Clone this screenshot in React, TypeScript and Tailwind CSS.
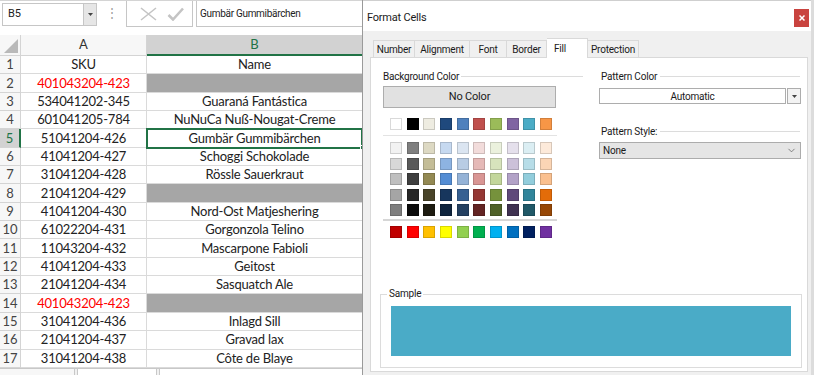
import React from 'react';
import { ChevronDown } from 'lucide-react';

type Row = { sku: string; name: string; red?: boolean; gray?: boolean };

const rows: Row[] = [
  { sku: 'SKU', name: 'Name' },
  { sku: '401043204-423', name: '', red: true, gray: true },
  { sku: '534041202-345', name: 'Guaraná Fantástica' },
  { sku: '601041205-784', name: 'NuNuCa Nuß-Nougat-Creme' },
  { sku: '51041204-426', name: 'Gumbär Gummibärchen' },
  { sku: '41041204-427', name: 'Schoggi Schokolade' },
  { sku: '31041204-428', name: 'Rössle Sauerkraut' },
  { sku: '21041204-429', name: '', gray: true },
  { sku: '41041204-430', name: 'Nord-Ost Matjeshering' },
  { sku: '61022204-431', name: 'Gorgonzola Telino' },
  { sku: '11043204-432', name: 'Mascarpone Fabioli' },
  { sku: '41041204-433', name: 'Geitost' },
  { sku: '21041204-434', name: 'Sasquatch Ale' },
  { sku: '401043204-423', name: '', red: true, gray: true },
  { sku: '31041204-436', name: 'Inlagd Sill' },
  { sku: '21041204-437', name: 'Gravad lax' },
  { sku: '31041204-438', name: 'Côte de Blaye' },
];

const themeColors = [
  'bg-[#ffffff] border-[#9a9a9a]', 'bg-[#000000]', 'bg-[#eeece1]', 'bg-[#1f497d]', 'bg-[#4f81bd]',
  'bg-[#c0504d]', 'bg-[#9bbb59]', 'bg-[#8064a2]', 'bg-[#4bacc6]', 'bg-[#f79646]',
];

const shades = [
  ['bg-[#f2f2f2]', 'bg-[#7f7f7f]', 'bg-[#ddd9c3]', 'bg-[#c6d9f0]', 'bg-[#dbe5f1]', 'bg-[#f2dcdb]', 'bg-[#ebf1dd]', 'bg-[#e5e0ec]', 'bg-[#dbeef3]', 'bg-[#fdeada]'],
  ['bg-[#d8d8d8]', 'bg-[#595959]', 'bg-[#c4bd97]', 'bg-[#8db3e2]', 'bg-[#b8cce4]', 'bg-[#e5b9b7]', 'bg-[#d7e3bc]', 'bg-[#ccc1d9]', 'bg-[#b7dde8]', 'bg-[#fbd5b5]'],
  ['bg-[#bfbfbf]', 'bg-[#3f3f3f]', 'bg-[#938953]', 'bg-[#548dd4]', 'bg-[#95b3d7]', 'bg-[#d99694]', 'bg-[#c3d69b]', 'bg-[#b2a2c7]', 'bg-[#92cddc]', 'bg-[#fac08f]'],
  ['bg-[#a5a5a5]', 'bg-[#262626]', 'bg-[#494429]', 'bg-[#17365d]', 'bg-[#366092]', 'bg-[#953734]', 'bg-[#76923c]', 'bg-[#5f497a]', 'bg-[#31859b]', 'bg-[#e36c09]'],
  ['bg-[#7f7f7f]', 'bg-[#0c0c0c]', 'bg-[#1d1b10]', 'bg-[#0f243e]', 'bg-[#244061]', 'bg-[#632423]', 'bg-[#4f6128]', 'bg-[#3f3151]', 'bg-[#205867]', 'bg-[#974806]'],
];

const standardColors = [
  'bg-[#c00000]', 'bg-[#ff0000]', 'bg-[#ffc000]', 'bg-[#ffff00]', 'bg-[#92d050]',
  'bg-[#00b050]', 'bg-[#00b0f0]', 'bg-[#0070c0]', 'bg-[#002060]', 'bg-[#7030a0]',
];

const tabs = [
  { label: 'Number', w: 'w-[42px]' },
  { label: 'Alignment', w: 'w-[55px]' },
  { label: 'Font', w: 'w-[37px]' },
  { label: 'Border', w: 'w-[40px]' },
  { label: 'Fill', w: 'w-[41px]', active: true },
  { label: 'Protection', w: 'w-[51px]' },
];

const Swatch: React.FC<{ c: string }> = ({ c }) => (
  <div className={`w-[12px] h-[12px] shrink-0 border border-black/15 ${c}`} />
);

const SwatchRow: React.FC<{ colors: string[] }> = ({ colors }) => (
  <div className="flex gap-[4.67px]">
    {colors.map((c, i) => <Swatch key={i} c={c} />)}
  </div>
);

const Sheet: React.FC = () => (
  <div className="w-[362px] shrink-0 flex flex-col overflow-hidden bg-white font-['Lato',sans-serif]">
    {/* formula bar */}
    <div className="h-[35px] shrink-0 flex items-start border-t border-[#d4d4d4] font-['Roboto',sans-serif] text-[#222]">
      <div className="ml-[2px] mt-[2px] flex h-[23px]">
        <div className="w-[82px] border border-[#c6c6c6] flex items-center pl-[5px] text-[11px]">B5</div>
        <div className="w-[13px] border border-l-0 border-[#c6c6c6] bg-[#e6e6e6] flex items-center justify-center">
          <svg width="5" height="3" viewBox="0 0 5 3"><polygon points="0,0 5,0 2.5,3" fill="#444" /></svg>
        </div>
      </div>
      <div className="w-[29px] h-[24px] flex items-center justify-center text-[12px] text-[#9a9a9a]">⋮</div>
      <div className="w-[67px] h-[26px] border-x border-b border-[#c6c6c6] flex items-center pl-[13px] gap-[10px]">
        <svg width="17" height="14" viewBox="0 0 17 14">
          <path d="M1 1 L16 13 M16 1 L1 13" stroke="#c4c4c4" strokeWidth="1.6" fill="none" />
        </svg>
        <svg width="17" height="14" viewBox="0 0 17 14">
          <path d="M1.5 8 L6 12.5 L16 1.5" stroke="#c4c4c4" strokeWidth="2.6" fill="none" />
        </svg>
      </div>
      <div className="ml-[3px] flex-1 h-[26px] border-l border-b border-[#c6c6c6] pl-[3px] flex items-center text-[10px] tracking-[-0.3px]">
        Gumbär Gummibärchen
      </div>
    </div>

    {/* column headers */}
    <div className="flex h-[21px] shrink-0 text-[13px]">
      <div className="w-[21px] shrink-0 bg-[#f7f7f7] border-r border-b border-[#d4d4d4] flex items-end justify-end p-[2px]">
        <svg width="14" height="14" viewBox="0 0 14 14"><polygon points="14,0 14,14 0,14" fill="#b9b9b9" /></svg>
      </div>
      <div className="w-[126px] shrink-0 bg-[#f7f7f7] border-r border-b border-[#d4d4d4] flex items-center justify-center text-[#333]">A</div>
      <div className="flex-1 bg-[#d2d2d2] border-b-2 border-[#217346] flex items-center justify-center text-[#217346]">B</div>
    </div>

    {/* rows */}
    {rows.map((r, i) => {
      const n = i + 1;
      const sel = n === 5;
      return (
        <div key={n} className="flex h-[18.35px] shrink-0 text-[13px] leading-none">
          <div
            className={
              sel
                ? 'w-[21px] shrink-0 flex items-center justify-center bg-[#d2d2d2] text-[#217346] border-b border-b-[#d4d4d4] border-r-2 border-r-[#217346]'
                : 'w-[21px] shrink-0 flex items-center justify-center bg-[#f7f7f7] text-[#444] border-b border-r border-[#d4d4d4]'
            }
          >
            {n}
          </div>
          <div className={`w-[126px] shrink-0 flex items-center justify-center tracking-[-0.2px] border-b border-r border-[#dadada] ${r.red ? 'text-[#ff0000]' : 'text-[#222]'}`}>
            {r.sku}
          </div>
          <div
            className={`relative flex-1 flex items-center justify-center tracking-[-0.2px] border-b border-[#dadada] text-[#222] ${r.gray ? 'bg-[#a6a6a6]' : ''} ${sel ? 'z-10 outline-2 outline-[#217346] -outline-offset-1' : ''}`}
          >
            {r.name}
            {sel && <div className="absolute -bottom-[3px] -right-[3px] w-[5px] h-[5px] bg-[#217346] border border-white" />}
          </div>
        </div>
      );
    })}

    {/* sheet tabs / scrollbar strip */}
    <div className="flex-1 flex bg-[#f0f0f0] border-t border-[#c8c8c8]">
      <div className="w-[75px] bg-[#f7f7f7] border-r border-[#c8c8c8]" />
      <div className="w-[2px]" />
      <div className="w-[80px] bg-white border-x border-[#c8c8c8]" />
      <div className="w-[2px]" />
      <div className="flex-1 bg-white border-l border-[#c8c8c8]" />
    </div>
  </div>
);

const Dialog: React.FC = () => (
  <div className="flex-1 flex border-l border-[#9a9a9a] font-['Roboto',sans-serif] text-[#1a1a1a]">
    <div className="flex-1 flex flex-col">
      {/* title bar */}
      <div className="h-[31px] shrink-0 bg-white border-t border-[#cfcfcf] flex items-start justify-between">
        <span className="ml-[4px] mt-[10px] text-[11px] tracking-[-0.2px] leading-[14px]">Format Cells</span>
        <div className="mt-[8px] mr-[2px] w-[15px] h-[18px] bg-[#c9433f] flex items-center justify-center">
          <svg width="6" height="6" viewBox="0 0 6 6"><path d="M0.5 0.5 L5.5 5.5 M5.5 0.5 L0.5 5.5" stroke="#fff" strokeWidth="1.5" /></svg>
        </div>
      </div>

      {/* body */}
      <div className="flex-1 flex flex-col bg-[#f0f0f0] pl-[7px] pr-[3px] pt-[7px] pb-[3px] text-[10px] tracking-[-0.2px]">
        <div className="h-[19px] shrink-0 flex items-end pl-[3px]">
          {tabs.map((t, i) =>
            t.active ? (
              <div key={t.label} className={`${t.w} relative z-10 -mb-px h-[20px] bg-white border-t border-r border-[#d9d9d9] flex items-start pl-[7px] pt-[2px]`}>
                {t.label}
              </div>
            ) : (
              <div key={t.label} className={`${t.w} h-[17px] bg-[#f0f0f0] border-t border-r border-[#d9d9d9] flex items-center justify-center ${i === 0 ? 'border-l' : ''}`}>
                {t.label}
              </div>
            )
          )}
        </div>

        <div className="flex-1 flex flex-col bg-white border border-[#d9d9d9]">
          <div className="flex pt-[12px] pl-[12px]">
            {/* background color */}
            <div className="w-[200px] flex flex-col">
              <div className="h-[12px] flex items-center">
                <span>Background Color</span>
                <div className="flex-1 h-px bg-[#dcdcdc] ml-[2px]" />
              </div>
              <div className="mt-[4px] w-[173px] h-[22px] bg-[#e1e1e1] border border-[#adadad] flex items-center justify-center text-[11px]">
                No Color
              </div>
              <div className="ml-[7px] mt-[10px]">
                <SwatchRow colors={themeColors} />
              </div>
              <div className="mt-[5px] w-[174px] h-px bg-[#e3e3e3]" />
              <div className="ml-[7px] mt-[6px] flex flex-col gap-[3.5px]">
                {shades.map((s, i) => <SwatchRow key={i} colors={s} />)}
              </div>
              <div className="mt-[3px] w-[174px] h-[2px] bg-[#d6d6d6]" />
              <div className="ml-[7px] mt-[5px]">
                <SwatchRow colors={standardColors} />
              </div>
            </div>

            {/* pattern */}
            <div className="ml-[16px] w-[202px] flex flex-col">
              <div className="h-[12px] flex items-center">
                <span className="ml-[2px]">Pattern Color</span>
                <div className="flex-1 h-px bg-[#dcdcdc] ml-[3px] mr-[1px]" />
              </div>
              <div className="mt-[6px] h-[16px] flex">
                <div className="w-[187px] bg-white border border-[#adadad] flex items-center justify-center">Automatic</div>
                <div className="ml-px w-[14px] bg-[#f3f3f3] border border-[#adadad] flex items-center justify-center">
                  <svg width="5" height="3" viewBox="0 0 5 3"><polygon points="0,0 5,0 2.5,3" fill="#444" /></svg>
                </div>
              </div>
              <div className="mt-[21px] h-[12px] flex items-center">
                <span className="ml-[2px]">Pattern Style:</span>
                <div className="flex-1 h-px bg-[#dcdcdc] ml-[3px] mr-[1px]" />
              </div>
              <div className="mt-[5px] h-[17px] bg-[#e5e5e5] border border-[#acacac] flex items-center justify-between pl-[3px] pr-[3px]">
                <span>None</span>
                <ChevronDown size={11} strokeWidth={1.5} color="#555" />
              </div>
            </div>
          </div>

          {/* sample */}
          <fieldset className="mt-auto ml-[9px] mr-[5px] mb-[3px] border border-[#dcdcdc]">
            <legend className="ml-[6px] px-[2px] leading-[12px]">Sample</legend>
            <div className="mx-[10px] mt-[6px] mb-[11px] h-[50px] bg-[#4aabc7]" />
          </fieldset>
        </div>
      </div>
    </div>
    <div className="w-[3px] bg-[#dcdcdc]" />
  </div>
);

const App: React.FC = () => (
  <div className="flex w-[814px] h-[375px] overflow-hidden bg-white">
    <Sheet />
    <Dialog />
  </div>
);

export default App;
